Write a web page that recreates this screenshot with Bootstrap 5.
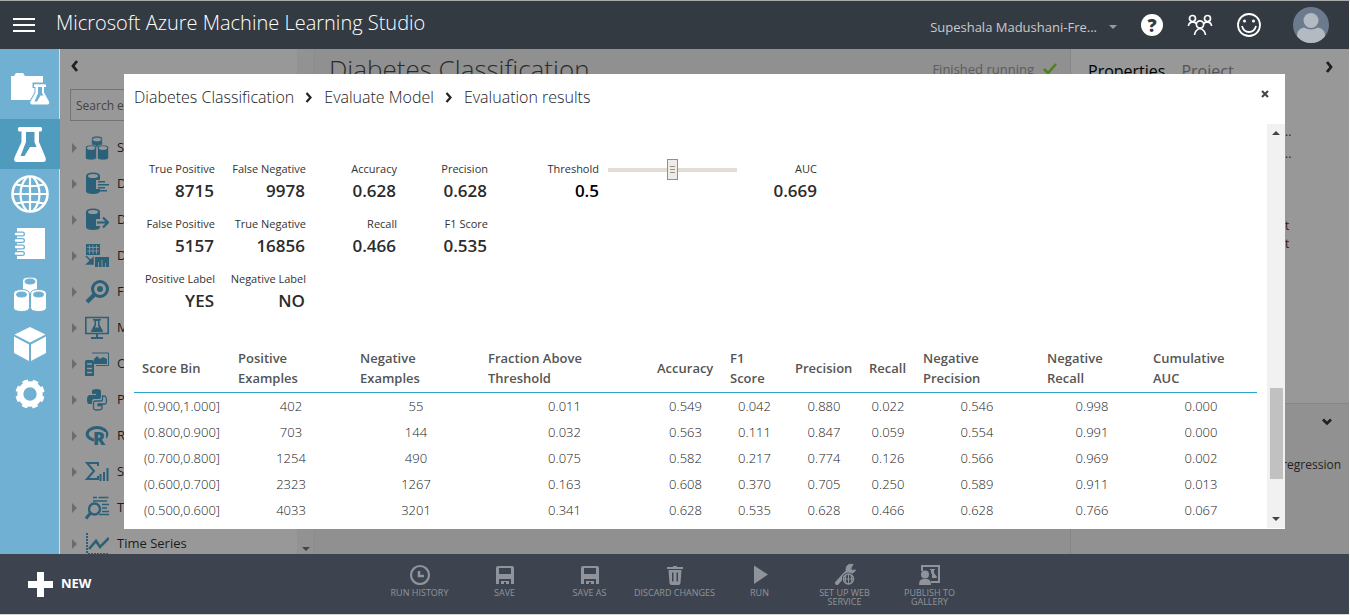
<!DOCTYPE html>
<html lang="en">
<head>
<meta charset="utf-8">
<meta name="viewport" content="width=device-width, initial-scale=1">
<title>Microsoft Azure Machine Learning Studio</title>
<link href="https://cdn.jsdelivr.net/npm/bootstrap@5.3.0/dist/css/bootstrap.min.css" rel="stylesheet">
<style>
  body { font-family: "Open Sans", "Noto Sans", sans-serif; font-size: 13px; color: #333; border-top: 1px solid #aaa; border-right: 1px solid #fff; border-bottom: 1px solid #d5d5d5; }
  svg { display: block; flex: none; }
  button { border: 0; background: none; padding: 0; color: inherit; font: inherit; }
  a { color: inherit; text-decoration: none; }

  .top-bar { height: 48px; background: #343a42; color: #fff; padding-left: 13px; padding-right: 20px; }
  .app-name { font-size: 20px; font-weight: 300; line-height: 24px; margin-left: 21px; padding-bottom: 4px; color: #fff; }
  .workspace { font-size: 13px; line-height: 20px; color: #c8cacd; }
  .caret-down { border: 4px solid transparent; border-top-color: #999; border-bottom: 0; }

  .side-rail { width: 60px; background: #70b1d3; border-right: 1px solid #cfdfe8; color: #fff; }
  .rail-item { height: 50px; display: flex; align-items: center; justify-content: center; }
  .rail-item.first { height: 70px; padding-top: 10px; }
  .rail-item.active { background: #4f9bbd; margin-right: -1px; }

  .stage { background: #909090; }
  .palette { width: 254px; background: #989898; color: #1c1c1c; }
  .palette-search { border: 1px solid #747474; background: transparent; height: 32px; font-size: 12px; padding: 0 5px; margin: 14px 0 9px 10px; width: 224px; border-radius: 0; }
  .palette-search::placeholder { color: #444; opacity: 1; }
  .palette-item { height: 36px; gap: 8px; padding-left: 12px; font-size: 13px; white-space: nowrap; }
  .palette-item svg { color: #2b6079; }
  .twisty { border: 5px solid transparent; border-left-color: #6c6c6c; border-right: 0; }
  .palette-scroll { width: 17px; background: #929292; padding-bottom: 3px; }
  .canvas-area { border-left: 1px solid #8a8a8a; border-right: 1px solid #868686; padding-left: 14px; padding-right: 12px; }
  .experiment-title { font-size: 26px; font-weight: 300; line-height: 34px; color: #2b2b2b; margin: 3px 0 0; }
  .run-state { font-size: 13px; line-height: 20px; color: #5c5c5c; margin-top: 10px; }
  .props { width: 278px; background: #989898; color: #222; }
  .props-tabs { padding: 8px 13px 0 17px; }
  .props-tab { font-size: 16px; line-height: 20px; padding-top: 4px; }
  .props-tab.other { color: #555; }
  .props-values { padding-left: 214px; margin-top: 40px; font-size: 12px; line-height: 22px; }
  .props-times { padding-left: 214px; margin-top: 52px; font-size: 12px; line-height: 18px; }
  .props-lower { height: 151px; border-top: 1px solid #868686; background: #919191; font-size: 12px; line-height: 18px; }

  .results { position: absolute; inset: 25px 64px 25px 64px; background: #fff; overflow: hidden; }
  .trail { height: 50px; font-size: 16px; font-weight: 300; line-height: 24px; padding: 11px 16px 0 10px; color: #222; }
  .trail-list { gap: 11px; }
  .fake-scroll { width: 18px; background: #f1f1f1; padding: 7px 0; margin-bottom: 1px; }
  .scroll-thumb { width: 13px; height: 91px; background: #c1c1c1; margin-top: auto; margin-bottom: 38px; }
  .arrow-up { border: 4px solid transparent; border-bottom-color: #444; border-top: 0; }
  .arrow-down { border: 4px solid transparent; border-top-color: #444; border-bottom: 0; }
  .results-pane { padding: 35px 10px 0; }

  .metric-grid { display: grid; grid-template-columns: 81px repeat(3, 91px); row-gap: 11px; text-align: right; }
  .metric-label { font-size: 11px; line-height: 20px; color: #333; }
  .metric-value { font-size: 17px; line-height: 24px; font-weight: 600; color: #2b2b2b; }
  .metric-grid .metric-value { padding-right: 1px; }
  .threshold { width: 111px; text-align: right; }
  .auc { width: 80px; text-align: right; }
  .slider { appearance: none; -webkit-appearance: none; width: 129px; height: 22px; background: transparent; margin: 0 0 0 9px; padding: 0; }
  .slider::-webkit-slider-runnable-track { height: 4px; background: #e3ddd6; }
  .slider::-webkit-slider-thumb { -webkit-appearance: none; width: 11px; height: 21px; margin-top: -9px; border: 1px solid #978f86; border-radius: 0;
    background: linear-gradient(#978f86, #978f86) 2px 6px / 5px 1px no-repeat, linear-gradient(#978f86, #978f86) 2px 9px / 5px 1px no-repeat, linear-gradient(#978f86, #978f86) 2px 12px / 5px 1px no-repeat, #efebe7; }

  .bins { table-layout: fixed; width: 100%; margin-top: 35px; border-collapse: separate; border-spacing: 0; }
  .bins th { font-size: 13px; line-height: 20px; font-weight: 600; color: #555; padding: 0 0 4px 8px; text-align: left; vertical-align: middle; white-space: nowrap; border-bottom: 1px solid #2ea3c8; }
  .bins td { height: 26px; padding: 0; text-align: center; font-size: 13px; line-height: 20px; font-weight: 300; color: #222; }
  .w54 { width: 54px; } .w65 { width: 65px; } .w73 { width: 73px; } .w74 { width: 74px; } .w96 { width: 96px; } .w106 { width: 106px; }
  .w112 { width: 112px; } .w122 { width: 122px; } .w124 { width: 124px; } .w128 { width: 128px; } .w169 { width: 169px; }

  .command-bar { height: 60px; background: #3e444f; color: #8f949c; }
  .bar-end { flex: 1 1 0; }
  .new-btn { font-size: 13px; font-weight: 700; color: #fff; padding-left: 28px; gap: 8px; }
  .command { width: 85px; font-size: 9px; line-height: 9px; padding-top: 9px; }
  .command svg { margin-bottom: 3px; }
</style>
</head>
<body class="vh-100 d-flex flex-column overflow-hidden">

<header class="top-bar d-flex align-items-center flex-shrink-0">
  <button type="button" aria-label="Menu"><svg width="22" height="16" stroke="#fff" stroke-width="2"><path d="M0 2h22M0 8h22M0 14h22"/></svg></button>
  <span class="app-name me-auto">Microsoft Azure Machine Learning Studio</span>
  <button type="button" class="workspace d-flex align-items-center gap-2 pt-1 me-4"><span>Supeshala Madushani-Fre...</span><span class="caret-down ms-1"></span></button>
  <button type="button" aria-label="Help" class="me-4"><svg width="22" height="22"><circle cx="11" cy="11" r="11" fill="#fff"/><text x="11" y="17.500" text-anchor="middle" font-size="18" font-weight="800" fill="#343a42">?</text></svg></button>
  <button type="button" aria-label="Community" class="me-4"><svg width="26" height="22" viewBox="0 0 26 22" fill="none" stroke="#fff" stroke-width="1.700"><circle cx="5.500" cy="4.500" r="3"/><circle cx="20.500" cy="4.500" r="3"/><circle cx="13" cy="10.500" r="3.600"/><path d="M1.500 12q0-3.500 4-4.200q2.500.2 4 1.800M24.500 12q0-3.500-4-4.200q-2.500.2-4 1.800M7.500 21q.5-5 5.500-6.500q5 1.500 5.500 6.500"/></svg></button>
  <button type="button" aria-label="Feedback" class="me-4"><svg width="24" height="24" fill="none" stroke="#fff" stroke-width="1.800"><circle cx="12" cy="12" r="11"/><path d="M5 13q1.500 6 7 6t7-6"/><circle cx="7.500" cy="8" r="1.500" fill="#fff" stroke="none"/><circle cx="16.500" cy="8" r="1.500" fill="#fff" stroke="none"/></svg></button>
  <button type="button" aria-label="Account" class="ms-2"><svg width="36" height="36" viewBox="0 0 36 36"><clipPath id="av"><circle cx="18" cy="18" r="18"/></clipPath><g clip-path="url(#av)"><path fill="#6b7a8d" d="M0 0h36v36H0z"/><circle cx="18" cy="13.500" r="7.500" fill="#b4bac2"/><path fill="#b4bac2" d="M4 36v-8q0-6 7-7.500q7 4 14 0q7 1.500 7 7.500v8z"/></g></svg></button>
</header>

<div class="d-flex flex-fill overflow-hidden">
  <nav class="side-rail flex-shrink-0" aria-label="Sections">
    <a href="#" class="rail-item first" aria-label="Projects"><svg width="40" height="32" viewBox="0 0 40 32" fill="#fff"><path d="M1 3h3l2-3h7l2 3h18v24H1z"/><path d="M23.500 10.500h12v3.500h-1.500v5.500l5 9q1 3.500-1.500 3.500H22q-2.500 0-1.500-3.500l5-9V14h-2z" stroke="#70b1d3" stroke-width="2"/><path d="M24 11.500h12v2.500H24zM25.500 14h8.500v5.500l5 9q.8 3-1.500 3H22q-2.300 0-1.500-3l5-9z"/><path fill="#70b1d3" d="M28 14h4v6l1.500 2.500h-3l-3.500 6h-2.500l3.500-8z"/></svg></a>
    <a href="#" class="rail-item active" aria-label="Experiments"><svg width="32" height="35" viewBox="0 0 32 35" fill="#fff"><path fill-rule="evenodd" d="M5.500 0h21q1.500 0 1.500 1.500v1.500q0 1.500-1.500 1.500H25v10.500l6.500 15.500q1.300 4.500-2.500 4.500H3q-3.800 0-2.500-4.500L7.500 15V4.500H5.500Q4 4.500 4 3V1.500Q4 0 5.500 0zM12 5v10L6.500 29h4l5.500-9h6.500L20.500 15V5z"/></svg></a>
    <a href="#" class="rail-item" aria-label="Web services"><svg width="38" height="38" viewBox="0 0 38 38" fill="none" stroke="#fff" stroke-width="2.200"><circle cx="19" cy="19" r="17.500" stroke-width="2.600"/><path d="M19 1v36M1 19h36M5 9.500q14 3.500 28 0M5 28.500q14-3.500 28 0M16 2q-6.500 7-6.500 17T16 36M22 2q6.500 7 6.500 17T22 36"/></svg></a>
    <a href="#" class="rail-item" aria-label="Notebooks"><svg width="32" height="32" viewBox="0 0 32 32" fill="#fff"><path d="M3 0h28v31H3z"/><path fill="none" stroke="#70b1d3" stroke-width="5" d="M0 6h8.500M0 12.500h8.500M0 19h8.500M0 25.500h8.500" stroke-linecap="round"/><path fill="none" stroke="#fff" stroke-width="2.400" stroke-linecap="round" d="M2 6h6.500M2 12.500h6.500M2 19h6.500M2 25.500h6.500"/></svg></a>
    <a href="#" class="rail-item" aria-label="Datasets"><svg width="34" height="36" viewBox="0 0 34 36" fill="#fff" stroke="#70b1d3"><path d="M9.500 5v12q0 3 7.500 3t7.500-3V5q0-4-7.500-4t-7.500 4z"/><ellipse cx="17" cy="5.500" rx="5" ry="2.500" fill="#70b1d3"/><path d="M.5 18v13.500q0 4 8 4t8-4V18q0-4.500-8-4.500t-8 4.500z"/><ellipse cx="8.500" cy="18.500" rx="5" ry="2.500" fill="#70b1d3"/><path d="M17.500 18v13.500q0 4 8 4t8-4V18q0-4.500-8-4.500t-8 4.500z"/><ellipse cx="25.500" cy="18.500" rx="5" ry="2.500" fill="#70b1d3"/></svg></a>
    <a href="#" class="rail-item" aria-label="Models"><svg width="32" height="34" viewBox="0 0 32 34" fill="#fff"><path d="M16 0l15.500 7.500L16 15.500.5 7.500zM0 9.500l15 8V34L0 26zM32 9.500l-15 8V34l15-8z"/></svg></a>
    <a href="#" class="rail-item" aria-label="Settings"><svg width="30" height="30" viewBox="-15 -15 30 30" fill="none" stroke="#fff"><circle r="9.700" stroke-width="6"/><circle r="13" stroke-width="3.200" stroke-dasharray="5.600 4.610" transform="rotate(10)"/></svg></a>
  </nav>

  <main class="stage d-flex flex-fill position-relative overflow-hidden">
    <aside class="palette d-flex flex-shrink-0">
      <div class="flex-fill overflow-hidden">
        <button type="button" class="d-block ms-2 mt-2" aria-label="Collapse"><svg width="14" height="18" fill="none" stroke="#1d1f22" stroke-width="2.800"><path d="M9 4L5 9L9 14"/></svg></button>
        <input type="search" class="palette-search d-block" aria-label="Search" placeholder="Search e">
        <div class="palette-item d-flex align-items-center"><span class="twisty"></span><svg width="24" height="24" fill="currentColor" stroke="#989898" stroke-width=".7"><path d="M6.500 3v7q0 2 5.500 2t5.500-2V3q0-3-5.500-3T6.500 3z"/><ellipse cx="12" cy="3.500" rx="4" ry="1.500" fill="#989898"/><path d="M.5 11.500v10q0 2.500 5.500 2.500t5.500-2.500v-10Q11.500 9 6 9T.5 11.500zM12.500 11.500v10q0 2.500 5.500 2.500t5.500-2.500v-10Q23.500 9 18 9t-5.500 2.500z"/><ellipse cx="6" cy="12" rx="4" ry="1.500" fill="#989898"/><ellipse cx="18" cy="12" rx="4" ry="1.500" fill="#989898"/></svg>S</div>
        <div class="palette-item d-flex align-items-center"><span class="twisty"></span><svg width="24" height="24" fill="currentColor"><path d="M1 4v15q0 3 7 3t7-3v-2h-4V8h4V4q0-3.500-7-3.500T1 4z"/><ellipse cx="8" cy="4" rx="5" ry="2" fill="#989898"/><path d="M13 9h7v1.600h-7zM13 12h11v1.600H13zM13 15h7v1.600h-7zM13 18h9v1.600h-9z"/></svg>D</div>
        <div class="palette-item d-flex align-items-center"><span class="twisty"></span><svg width="24" height="24" fill="currentColor"><path d="M1 4v15q0 3 7 3t7-3v-1h-4v-7h4V4q0-3.500-7-3.500T1 4z"/><ellipse cx="8" cy="4" rx="5" ry="2" fill="#989898"/><path d="M12 14.500h11M18 9.500l5 5l-5 5" fill="none" stroke="currentColor" stroke-width="2.200"/></svg>D</div>
        <div class="palette-item d-flex align-items-center"><span class="twisty"></span><svg width="24" height="24" fill="currentColor"><path d="M1 0h14v11H1zM10 13h14v10H10z"/><path d="M2 3.500h12M2 7h12M4.500 1v9M8 1v9M11.500 1v9M13.500 23v-5M17 23v-7M20.500 23v-4" stroke="#989898" stroke-width=".8"/><path d="M1 12l6 6M8 14v6H2z" stroke="currentColor" stroke-width="1.500"/></svg>D</div>
        <div class="palette-item d-flex align-items-center"><span class="twisty"></span><svg width="24" height="24" fill="none" stroke="currentColor"><circle cx="15" cy="9" r="7.500" stroke-width="3"/><circle cx="15" cy="9" r="3" fill="currentColor" stroke="none"/><path d="M9.500 14.500L2 22" stroke-width="4"/></svg>F</div>
        <div class="palette-item d-flex align-items-center"><span class="twisty"></span><svg width="24" height="24" fill="currentColor"><path d="M.8 1.500h22.400v16H.8z" fill="none" stroke="currentColor" stroke-width="1.600"/><path d="M8 3h8v1.500h-1.500v4L18 15q0 1-1 1H7q-1 0-1-1l3.500-6.500v-4H8zM11 18h2v3h5v2H6v-2h5z"/><path d="M11 5h2v4.500l1 2h-4l1-2z" fill="#989898"/></svg>M</div>
        <div class="palette-item d-flex align-items-center"><span class="twisty"></span><svg width="24" height="24" fill="currentColor"><path d="M7 1h16.500v12.500H11" fill="none" stroke="currentColor"/><path d="M9 12V7l3-3l3 3l3-2l4 2v5zM0 10q0-2 1.500-2H7q2 0 2 2v14H0z"/><path d="M2 12h5M2 16.500h5M2 20.500h5" stroke="#989898" stroke-width="1.500"/></svg>O</div>
        <div class="palette-item d-flex align-items-center"><span class="twisty"></span><svg width="24" height="24" fill="currentColor"><path d="M7 3q0-2 4.500-2T16 3v6q0 2-2 2H9q-2 0-2 3v2H4q-2 0-2-4.500T5 7h6V6H7z"/><path d="M17.500 8H20q1.500 1 1.500 4.500T20 16h-7v1.500h4V20q0 2-4.500 2T8.500 20v-5q0-2 2-2h5q2 0 2-2z" fill="none" stroke="currentColor" stroke-width="1.300"/></svg>P</div>
        <div class="palette-item d-flex align-items-center"><span class="twisty"></span><svg width="24" height="24" fill="currentColor"><ellipse cx="12" cy="10" rx="9.800" ry="6.500" fill="none" stroke="currentColor" stroke-width="3"/><path d="M9 8h12v14H9z" fill="#989898"/><text x="8" y="21" font-size="18" font-weight="800">R</text></svg>R</div>
        <div class="palette-item d-flex align-items-center"><span class="twisty"></span><svg width="24" height="24" fill="none" stroke="currentColor" stroke-width="2"><path d="M13 6V3H2l7 8l-7 8h11v-3M15.500 21v-7M19 21v-9M22.500 21V8"/></svg>S</div>
        <div class="palette-item d-flex align-items-center"><span class="twisty"></span><svg width="24" height="24" fill="none" stroke="currentColor" stroke-width="1.600"><circle cx="9.500" cy="13" r="5.500" stroke-width="2.400"/><path d="M5.500 17L1 22.500" stroke-width="3"/><path d="M8 1.500h4M13.500 1.500h10M8 5h14M17 8.500h7M17 12h5M17 15.500h7M14 18.500h10"/></svg>T</div>
        <div class="palette-item d-flex align-items-center"><span class="twisty"></span><svg width="24" height="24" fill="none" stroke="currentColor" stroke-width="2"><path d="M2 1v22M3 22h21" stroke-dasharray="2 1"/><path d="M4 17l7-8l4 6l9-9" stroke-width="2.600"/></svg>Time Series</div>
      </div>
      <div class="palette-scroll d-flex align-items-end justify-content-center"><span class="arrow-down"></span></div>
    </aside>

    <section class="canvas-area flex-fill d-flex justify-content-between align-items-start">
      <h1 class="experiment-title">Diabetes Classification</h1>
      <div class="run-state d-flex gap-2"><span>Finished running</span><svg width="16" height="18" fill="none" stroke="#4f8022" stroke-width="2.600"><path d="M2 10l4 4l8-9"/></svg></div>
    </section>

    <aside class="props flex-shrink-0 d-flex flex-column">
      <div class="props-tabs d-flex">
        <a href="#" class="props-tab text-black">Properties</a>
        <a href="#" class="props-tab other ms-3 me-auto">Project</a>
        <button type="button" class="align-self-start" aria-label="Expand"><svg width="14" height="20" fill="none" stroke="#1d1f22" stroke-width="2.800"><path d="M5 5l4 5L5 15"/></svg></button>
      </div>
      <div class="props-values"><div>..</div><div>..</div></div>
      <div class="props-times"><div>t</div><div>t</div></div>
      <div class="props-lower mt-auto">
        <div class="d-flex justify-content-end pe-3 pt-2"><svg width="12" height="20" fill="none" stroke="#1d1f22" stroke-width="2.600"><path d="M2 7.500l4 4l4-4"/></svg></div>
        <div class="text-end pe-2 pt-4 mt-n1">regression</div>
      </div>
    </aside>

    <div class="results d-flex flex-column" role="dialog" aria-label="Evaluation results">
      <div class="trail d-flex justify-content-between align-items-start flex-shrink-0">
        <div class="trail-list d-flex align-items-center">
          <a href="#">Diabetes Classification</a>
          <svg width="8" height="12" fill="none" stroke="#222" stroke-width="2.200"><path d="M1.500 2l4 4.500l-4 4.500"/></svg>
          <a href="#">Evaluate Model</a>
          <svg width="8" height="12" fill="none" stroke="#222" stroke-width="2.200"><path d="M1.500 2l4 4.500l-4 4.500"/></svg>
          <span>Evaluation results</span>
        </div>
        <button type="button" class="pt-1" aria-label="Close"><svg width="8" height="10" stroke="#444" stroke-width="2"><path d="M1 2l6 6M7 2l-6 6"/></svg></button>
      </div>
      <div class="d-flex flex-fill overflow-hidden">
        <div class="results-pane flex-fill">
          <div class="d-flex align-items-start">
            <div class="metric-grid">
              <div><div class="metric-label">True Positive</div><div class="metric-value">8715</div></div>
              <div><div class="metric-label">False Negative</div><div class="metric-value">9978</div></div>
              <div><div class="metric-label">Accuracy</div><div class="metric-value">0.628</div></div>
              <div><div class="metric-label">Precision</div><div class="metric-value">0.628</div></div>
              <div><div class="metric-label">False Positive</div><div class="metric-value">5157</div></div>
              <div><div class="metric-label">True Negative</div><div class="metric-value">16856</div></div>
              <div><div class="metric-label">Recall</div><div class="metric-value">0.466</div></div>
              <div><div class="metric-label">F1 Score</div><div class="metric-value">0.535</div></div>
              <div><div class="metric-label">Positive Label</div><div class="metric-value">YES</div></div>
              <div><div class="metric-label">Negative Label</div><div class="metric-value">NO</div></div>
            </div>
            <div class="threshold"><label class="metric-label d-block" for="threshold">Threshold</label><div class="metric-value text-black">0.5</div></div>
            <input class="slider" type="range" id="threshold" min="0" max="1" step="0.01" value="0.5">
            <div class="auc"><div class="metric-label">AUC</div><div class="metric-value">0.669</div></div>
          </div>
          <table class="bins">
            <colgroup><col class="w96"><col class="w122"><col class="w128"><col class="w169"><col class="w73"><col class="w65"><col class="w74"><col class="w54"><col class="w124"><col class="w106"><col class="w112"></colgroup>
            <thead><tr><th>Score Bin</th><th>Positive<br>Examples</th><th>Negative<br>Examples</th><th>Fraction Above<br>Threshold</th><th>Accuracy</th><th>F1<br>Score</th><th>Precision</th><th>Recall</th><th>Negative<br>Precision</th><th>Negative<br>Recall</th><th>Cumulative<br>AUC</th></tr></thead>
            <tbody>
              <tr><td>(0.900,1.000]</td><td>402</td><td>55</td><td>0.011</td><td>0.549</td><td>0.042</td><td>0.880</td><td>0.022</td><td>0.546</td><td>0.998</td><td>0.000</td></tr>
              <tr><td>(0.800,0.900]</td><td>703</td><td>144</td><td>0.032</td><td>0.563</td><td>0.111</td><td>0.847</td><td>0.059</td><td>0.554</td><td>0.991</td><td>0.000</td></tr>
              <tr><td>(0.700,0.800]</td><td>1254</td><td>490</td><td>0.075</td><td>0.582</td><td>0.217</td><td>0.774</td><td>0.126</td><td>0.566</td><td>0.969</td><td>0.002</td></tr>
              <tr><td>(0.600,0.700]</td><td>2323</td><td>1267</td><td>0.163</td><td>0.608</td><td>0.370</td><td>0.705</td><td>0.250</td><td>0.589</td><td>0.911</td><td>0.013</td></tr>
              <tr><td>(0.500,0.600]</td><td>4033</td><td>3201</td><td>0.341</td><td>0.628</td><td>0.535</td><td>0.628</td><td>0.466</td><td>0.628</td><td>0.766</td><td>0.067</td></tr>
            </tbody>
          </table>
        </div>
        <div class="fake-scroll d-flex flex-column align-items-center flex-shrink-0"><span class="arrow-up"></span><span class="scroll-thumb"></span><span class="arrow-down"></span></div>
      </div>
    </div>
  </main>
</div>

<footer class="command-bar d-flex flex-shrink-0">
  <div class="bar-end d-flex"><button type="button" class="new-btn d-flex align-items-center"><svg width="25" height="25" fill="#fff"><path d="M9 0h7v9h9v7h-9v9H9v-9H0V9h9z"/></svg>NEW</button></div>
  <button type="button" class="command d-flex flex-column align-items-center"><svg width="22" height="22" fill="none" stroke="currentColor" stroke-width="2.200"><circle cx="11" cy="12" r="9"/><path d="M10 8v5h5" stroke-width="2.600"/></svg>RUN HISTORY</button>
  <button type="button" class="command d-flex flex-column align-items-center"><svg width="22" height="22" fill="currentColor"><path fill-rule="evenodd" d="M4 3h14q2 0 2 2v16h-3v-5H5v5H2V5q0-2 2-2zM5 5v6h12V5zM7 18h8v3h-3v-2h-2v2H7z"/></svg>SAVE</button>
  <button type="button" class="command d-flex flex-column align-items-center"><svg width="22" height="22" fill="currentColor"><path fill-rule="evenodd" d="M4 3h14q2 0 2 2v16h-3v-5H5v5H2V5q0-2 2-2zM5 5v6h12V5zM7 18h8v3h-3v-2h-2v2H7z"/></svg>SAVE AS</button>
  <button type="button" class="command d-flex flex-column align-items-center"><svg width="22" height="22" fill="currentColor"><path fill-rule="evenodd" d="M9 3h4v1h6v2H3V4h6zM4.500 7h13L16.500 20q-.2 2-2 2h-7q-1.800 0-2-2zM8 9.500v9h1.500v-9zM12.500 9.500v9H14v-9z"/></svg>DISCARD CHANGES</button>
  <button type="button" class="command d-flex flex-column align-items-center"><svg width="22" height="22" fill="currentColor"><path d="M5 2.500v18.500l14-9.500z"/></svg>RUN</button>
  <button type="button" class="command d-flex flex-column align-items-center"><svg width="24" height="22" fill="none" stroke="currentColor"><path d="M4 20l9-10" stroke-width="4" stroke-linecap="round"/><path d="M20 1.500q-5-1-6.500 2.500t1 6q5 2 8-3l-4 .500q-2-2 1.500-6z" fill="currentColor"/><circle cx="15.500" cy="16" r="6.500" fill="#3e444f" stroke="none"/><circle cx="15.500" cy="16" r="5" stroke-width="1.500"/><path d="M15.500 11v10M10.500 16h10M13 12q-1.500 4 0 8M18 12q1.500 4 0 8"/></svg>SET UP WEB<br>SERVICE</button>
  <button type="button" class="command d-flex flex-column align-items-center"><svg width="24" height="22" fill="currentColor"><path d="M4 8V3h17v16h-8" fill="none" stroke="currentColor" stroke-width="2"/><circle cx="7" cy="11.500" r="4"/><path d="M1 22q0-6 4-6h4q4 0 4 6zM12 6h5v1h-1v3l3 4q0 1-1 1h-4v-4l-1-1V7h-1z"/></svg>PUBLISH TO<br>GALLERY</button>
  <div class="bar-end"></div>
</footer>

<script src="https://cdn.jsdelivr.net/npm/bootstrap@5.3.0/dist/js/bootstrap.bundle.min.js"></script>
</body>
</html>
